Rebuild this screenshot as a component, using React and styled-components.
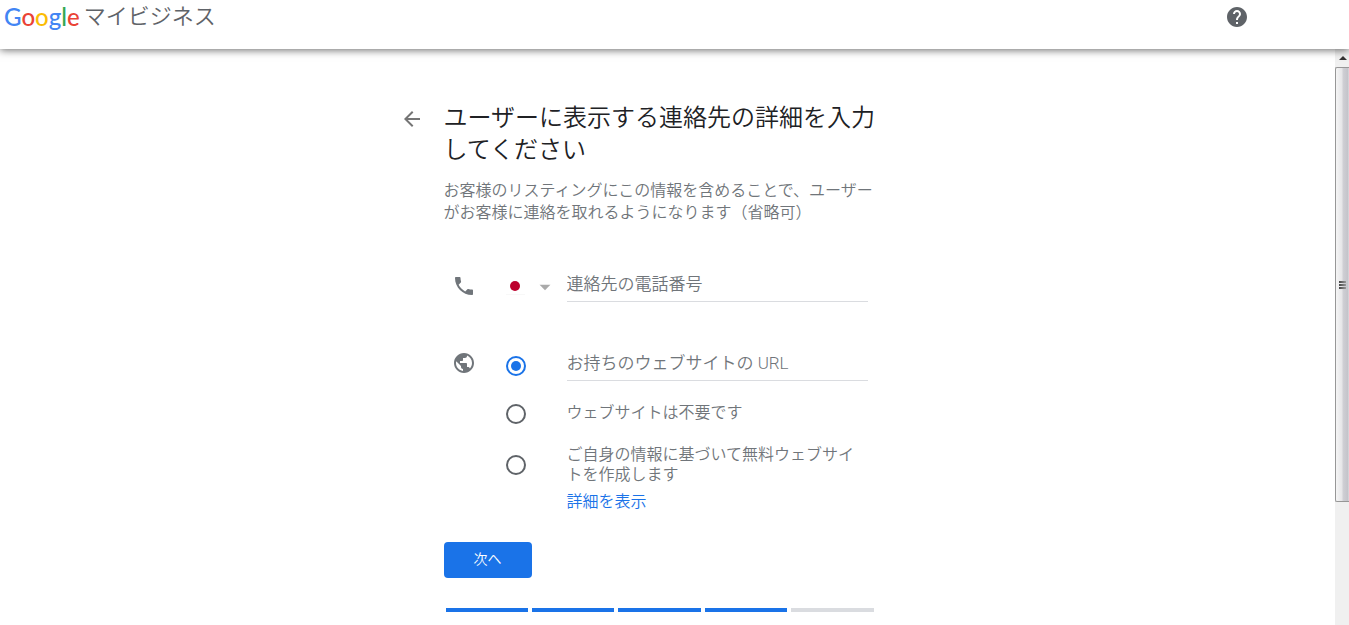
import React, { useState } from "react";
import styled, { createGlobalStyle } from "styled-components";
import { MdArrowBack, MdArrowDropDown, MdHelp, MdPhone, MdPublic } from "react-icons/md";

const GlobalStyle = createGlobalStyle`
  * {
    box-sizing: border-box;
  }
  body {
    margin: 0;
    background: #fff;
    color: #70757a;
    font-family: Roboto, "Noto Sans CJK JP", sans-serif;
    font-weight: 350;
  }
`

const Page = styled.div`
  display: flex;
  flex-direction: column;
  height: 100vh;
  overflow: hidden;
`

const Header = styled.header`
  display: flex;
  justify-content: space-between;
  align-items: flex-start;
  flex: none;
  height: 49px;
  padding: 5px 100px 0 4px;
  background: #fff;
  box-shadow: 0 1px 8px rgba(0, 0, 0, 0.6);
  z-index: 1;
`

const Brand = styled.a`
  display: flex;
  align-items: center;
  gap: 4px;
  height: 24px;
  color: #5f6368;
  font-size: 22px;
  line-height: 24px;
  text-decoration: none;
`

const Logo = styled.span`
  font-family: Lato, sans-serif;
  font-size: 24px;
  font-weight: 500;
`

const Letter = styled.span`
  color: ${props => props.$color};
`

const IconButton = styled.button`
  display: flex;
  width: 24px;
  height: 24px;
  padding: 0;
  border: 0;
  background: none;
  color: ${props => props.$color};
  font-size: 24px;
  cursor: pointer;
`

const Body = styled.div`
  display: flex;
  flex: 1;
  min-height: 0;
`

const Content = styled.main`
  flex: 1;
  overflow: hidden;
`

const Wizard = styled.div`
  display: grid;
  grid-template-columns: 44px 432px;
  width: fit-content;
  margin: 0 auto;
  padding: 53px 60px 0 0;
`

const BackCell = styled.div`
  padding-top: 5px;
`

const Title = styled.h1`
  margin: 0;
  color: #202124;
  font-size: 24px;
  font-weight: 350;
  line-height: 32px;
`

const Lead = styled.p`
  margin: 14px 0 0;
  font-size: 16px;
  line-height: 22px;
`

const Field = styled.div`
  display: grid;
  grid-template-columns: 24px 1fr;
  column-gap: 30px;
  margin-top: ${props => props.$top};
  padding: 0 8px;
`

const FieldIcon = styled.div`
  display: flex;
  height: 24px;
  margin-top: ${props => props.$top};
  font-size: 24px;
`

const Options = styled.div`
  display: flex;
  flex-direction: column;
  gap: 21px;
`

const Row = styled.div`
  display: grid;
  grid-template-columns: 61px 1fr;
  align-items: center;
`

const Input = styled.input`
  width: 100%;
  height: 36px;
  padding: 0;
  border: 0;
  border-bottom: 1px solid #dadce0;
  outline: none;
  background: none;
  color: #202124;
  font: inherit;
  font-size: 17px;

  &::placeholder {
    color: #70757a;
    opacity: 1;
  }
`

const Country = styled.label`
  position: relative;
  display: flex;
  align-items: center;
  gap: 7px;
  padding-top: 5px;
  color: #aaa;
  font-size: 26px;
`

const Flag = styled.span`
  display: flex;
  justify-content: center;
  align-items: center;
  width: 19px;
  height: 16px;
  border-bottom: 1px solid #f8f8f8;

  &::before {
    content: "";
    width: 10px;
    height: 10px;
    border-radius: 50%;
    background: #bc002d;
  }
`

/* native list sits over the flag and the arrow */
const CountrySelect = styled.select`
  position: absolute;
  inset: 0;
  width: 100%;
  opacity: 0;
  cursor: pointer;
`

const Radio = styled.input`
  appearance: none;
  width: 20px;
  height: 20px;
  margin: ${props => props.$top} 0 0;
  border: 2px solid #5f6368;
  border-radius: 50%;
  cursor: pointer;

  &:checked {
    border-color: #1a73e8;
    background: #1a73e8;
    background-clip: content-box;
    padding: 3px;
  }
`

const OptionLabel = styled.label`
  font-size: 16px;
  line-height: 20px;
  cursor: pointer;
`

const MoreLink = styled.a`
  margin: -14px 0 0 61px;
  color: #1a73e8;
  font-size: 16px;
  line-height: 20px;
  text-decoration: none;
`

const NextButton = styled.button`
  width: 88px;
  height: 36px;
  margin-top: 30px;
  padding: 0 0 4px;
  border: 0;
  border-radius: 4px;
  background: #1a73e8;
  color: #fff;
  font: inherit;
  font-size: 14px;
  cursor: pointer;
`

const Steps = styled.div`
  display: flex;
  gap: 4px;
  margin: 30px 2px 0;
`

const Step = styled.span`
  flex: 1;
  height: 4px;
  background: ${props => props.$done ? "#1a73e8" : "#dadce0"};
`

const ScrollTrack = styled.div`
  display: flex;
  flex-direction: column;
  flex: none;
  width: 14px;
  background: #f0f0f0;
`

const ScrollUp = styled.div`
  display: flex;
  justify-content: center;
  align-items: center;
  height: 18px;
  padding-left: 2px;

  &::before {
    content: "";
    border: 4px solid transparent;
    border-top: 0;
    border-bottom-color: #333;
  }
`

const ScrollThumb = styled.div`
  display: flex;
  flex-direction: column;
  justify-content: center;
  align-items: center;
  gap: 1px;
  flex: 435;
  border: 1px solid #979797;
  border-right: 0;
  border-radius: 2px 0 0 2px;
  background: linear-gradient(to right, #f5f5f5, #e6e6e8 45%, #cfcfd4 55%, #c4c4ca 90%, #dcdce0);
`

const Grip = styled.span`
  width: 7px;
  height: 2px;
  background: linear-gradient(to right, #444, #999);
`

const ScrollRest = styled.div`
  flex: 123;
`

const letters = [
  ["G", "#4285f4"],
  ["o", "#ea4335"],
  ["o", "#fbbc05"],
  ["g", "#4285f4"],
  ["l", "#34a853"],
  ["e", "#ea4335"]
]

const steps = [true, true, true, true, false]

function App() {
  const [site, setSite] = useState("own")

  const handleSite = event => {
    setSite(event.target.value)
  }

  return (
    <Page>
      <GlobalStyle />
      <Header>
        <Brand href="#">
          <Logo>
            {letters.map(([char, color], i) => <Letter key={i} $color={color}>{char}</Letter>)}
          </Logo>
          <span>マイビジネス</span>
        </Brand>
        <IconButton type="button" aria-label="ヘルプ" $color="#5f6368"><MdHelp /></IconButton>
      </Header>
      <Body>
        <Content>
          <Wizard>
            <BackCell>
              <IconButton type="button" aria-label="戻る" $color="#757575"><MdArrowBack /></IconButton>
            </BackCell>
            <form onSubmit={event => event.preventDefault()}>
              <Title>ユーザーに表示する連絡先の詳細を入力してください</Title>
              <Lead>お客様のリスティングにこの情報を含めることで、ユーザーがお客様に連絡を取れるようになります（省略可）</Lead>

              <Field $top="42px">
                <FieldIcon $top="8px"><MdPhone /></FieldIcon>
                <Row>
                  <Country>
                    <Flag />
                    <MdArrowDropDown />
                    <CountrySelect aria-label="国">
                      <option>日本</option>
                    </CountrySelect>
                  </Country>
                  <Input type="tel" aria-label="連絡先の電話番号" placeholder="連絡先の電話番号" />
                </Row>
              </Field>

              <Field $top="43px" role="radiogroup" aria-label="ウェブサイト">
                <FieldIcon $top="6px"><MdPublic /></FieldIcon>
                <Options>
                  <Row>
                    <Radio type="radio" name="site" value="own" $top="6px" aria-label="お持ちのウェブサイトの URL" checked={site === "own"} onChange={handleSite} />
                    <Input type="url" aria-label="お持ちのウェブサイトの URL" placeholder="お持ちのウェブサイトの URL" />
                  </Row>
                  <Row>
                    <Radio type="radio" name="site" value="none" id="site-none" $top="2px" checked={site === "none"} onChange={handleSite} />
                    <OptionLabel htmlFor="site-none">ウェブサイトは不要です</OptionLabel>
                  </Row>
                  <Row>
                    <Radio type="radio" name="site" value="free" id="site-free" $top="0" checked={site === "free"} onChange={handleSite} />
                    <OptionLabel htmlFor="site-free">ご自身の情報に基づいて無料ウェブサイトを作成します</OptionLabel>
                  </Row>
                  <MoreLink href="#">詳細を表示</MoreLink>
                </Options>
              </Field>

              <NextButton type="submit">次へ</NextButton>
              <Steps>
                {steps.map((done, i) => <Step key={i} $done={done} />)}
              </Steps>
            </form>
          </Wizard>
        </Content>
        <ScrollTrack>
          <ScrollUp />
          <ScrollThumb>
            <Grip />
            <Grip />
            <Grip />
          </ScrollThumb>
          <ScrollRest />
        </ScrollTrack>
      </Body>
    </Page>
  )
}

export default App;
